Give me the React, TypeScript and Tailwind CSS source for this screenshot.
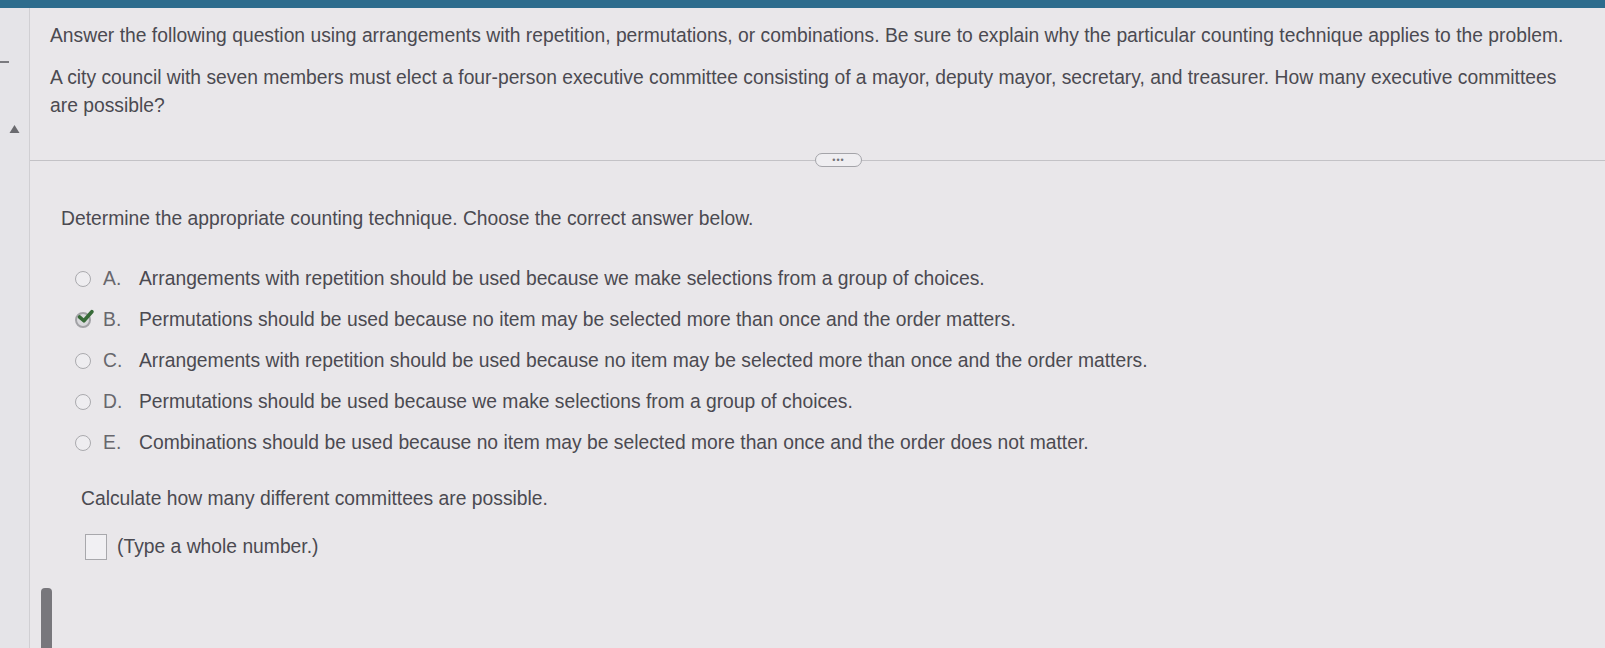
import React from "react";

const options = [
  { key: "A", text: "Arrangements with repetition should be used because we make selections from a group of choices." },
  { key: "B", text: "Permutations should be used because no item may be selected more than once and the order matters.", checked: true },
  { key: "C", text: "Arrangements with repetition should be used because no item may be selected more than once and the order matters." },
  { key: "D", text: "Permutations should be used because we make selections from a group of choices." },
  { key: "E", text: "Combinations should be used because no item may be selected more than once and the order does not matter." },
];

function Radio({ checked }: { checked?: boolean }) {
  if (checked) {
    return (
      <span className="relative inline-block h-[16px] w-[16px] shrink-0">
        <span className="absolute inset-0 rounded-full border-2 border-[#a2a2a6] bg-[#d9d9dc]" />
        <svg viewBox="0 0 16 16" className="absolute -right-[3px] -top-[4px] h-[17px] w-[17px]">
          <path d="M2.5 8.5 L6.5 12 L14 3.5" fill="none" stroke="#376a38" strokeWidth="3.4" strokeLinecap="round" strokeLinejoin="round" />
        </svg>
      </span>
    );
  }
  return <span className="inline-block h-[16px] w-[16px] shrink-0 rounded-full border-[1.5px] border-[#aaaaae] bg-[#eeedf0]" />;
}

export default function App() {
  return (
    <div
      className="flex h-[648px] w-[1605px] flex-col overflow-hidden bg-[#e9e7ea] text-[#4b4a51]"
      style={{ fontFamily: '"Liberation Sans", Arial, sans-serif' }}
    >
      <div className="h-[8px] shrink-0 bg-[#2d6c8d]" />
      <div className="flex flex-1">
        {/* left rail */}
        <div className="relative w-[30px] shrink-0 border-r border-[#d0cfd3] bg-[#e5e4e8]">
          <div className="absolute left-0 top-[53px] h-[2px] w-[9px] bg-[#7a7a7f]" />
          <svg viewBox="0 0 12 10" className="absolute left-[8px] top-[116px] h-[10px] w-[13px]">
            <path d="M6 1 L11 9 L1 9 Z" fill="#6a6a6f" />
          </svg>
        </div>

        <div className="relative flex-1">
          <div className="pl-[20px] pt-[14px] text-[19.3px] leading-[28px]">
            <p>
              Answer the following question using arrangements with repetition, permutations, or combinations. Be sure to explain why the particular counting technique applies to the problem.
            </p>
            <p className="mt-[14px] w-[1510px]">
              A city council with seven members must elect a four-person executive committee consisting of a mayor, deputy mayor, secretary, and treasurer. How many executive committees are possible?
            </p>
          </div>

          {/* divider */}
          <div className="mt-[33px] flex items-center">
            <div className="h-px w-[785px] bg-[#c3c2c6]" />
            <div className="flex h-[14px] w-[47px] items-center justify-center rounded-full border border-[#a4a4a9] bg-[#efeef1] text-[9px] leading-none tracking-[1px] text-[#75757a]">
              •••
            </div>
            <div className="h-px flex-1 bg-[#c3c2c6]" />
          </div>

          <div className="pl-[31px] text-[19.3px]">
            <p className="mt-[40px] leading-[24px]">Determine the appropriate counting technique. Choose the correct answer below.</p>

            <div className="mt-[36px] flex flex-col gap-[17px] pl-[14px]">
              {options.map((o) => (
                <div key={o.key} className="flex items-center leading-[24px]">
                  <Radio checked={o.checked} />
                  <span className="ml-[12px] w-[36px] text-[#68676d]">{o.key}.</span>
                  <span>{o.text}</span>
                </div>
              ))}
            </div>

            <p className="mt-[32px] pl-[20px] leading-[24px]">Calculate how many different committees are possible.</p>

            <div className="mt-[23px] flex items-center pl-[24px] leading-[24px]">
              <span className="inline-block h-[26px] w-[22px] border-[1.5px] border-[#a8a8ac] bg-[#f1f0f3]" />
              <span className="ml-[10px]">(Type a whole number.)</span>
            </div>
          </div>

          <div className="absolute bottom-0 left-[11px] h-[60px] w-[11px] rounded-t-[4px] bg-[#78777c]" />
        </div>
      </div>
    </div>
  );
}
